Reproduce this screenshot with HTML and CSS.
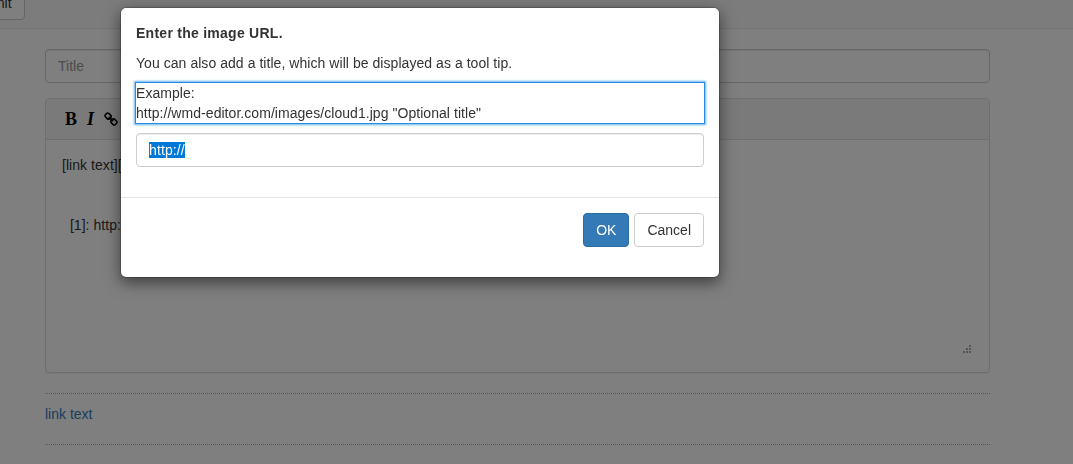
FILE: index.html
```
<!DOCTYPE html>
<html lang="en">
<head>
<meta charset="utf-8">
<title>Editor</title>
<link rel="stylesheet" href="styles.css">
</head>
<body>
<header class="navbar"><button class="btn btn-default submit">Submit</button></header>
<main class="container">
  <input class="form-control title-input" type="text" placeholder="Title">
  <section class="panel">
    <div class="toolbar">
      <span class="tool bold">B</span>
      <span class="tool italic">I</span>
      <svg class="link-icon" viewBox="0 0 14 14" width="14" height="14">
        <g fill="none" stroke="#000" stroke-width="1.6">
          <rect x="-2.9" y="-2.4" width="5.8" height="4.8" rx="1.8" transform="translate(4.1 4.1) rotate(45)"/>
          <rect x="-2.9" y="-2.4" width="5.8" height="4.8" rx="1.8" transform="translate(9.9 9.9) rotate(45)"/>
          <path d="M4.9 4.9l4.2 4.2"/>
        </g>
      </svg>
    </div>
    <div class="editor">[link text][1]


  [1]: http://
      <svg class="grip" viewBox="0 0 8 8" width="8" height="8"><path fill="#aaa" d="M6 0h2v2H6zM3 3h2v2H3zM6 3h2v2H6zM0 6h2v2H0zM3 6h2v2H3zM6 6h2v2H6z"/></svg>
    </div>
  </section>
  <div class="preview"><a class="link">link text</a></div>
</main>
<div class="backdrop"></div>
<div class="modal" role="dialog">
  <div class="modal-body">
    <p class="text heading"><b>Enter the image URL.</b></p>
    <p class="text">You can also add a title, which will be displayed as a tool tip.</p>
    <p class="text example">Example:<br>http://wmd-editor.com/images/cloud1.jpg "Optional title"</p>
    <div class="form-control url"><span class="selected">http://</span></div>
  </div>
  <div class="modal-footer">
    <button class="btn btn-primary">OK</button>
    <button class="btn btn-default">Cancel</button>
  </div>
</div>
</body>
</html>
```
FILE: styles.css
```
* { box-sizing: border-box; }
body {
  margin: 0;
  height: 464px;
  overflow: hidden;
  background: #fff;
  color: #333;
  font: 14px/20px "Liberation Sans", Arial, sans-serif;
}
.navbar {
  height: 29px;
  display: flex;
  align-items: flex-start;
  background: #f8f8f8;
  border-bottom: 1px solid #e7e7e7;
}
.btn {
  height: 34px;
  padding: 6px 12px;
  border: 1px solid #ccc;
  border-radius: 4px;
  font: inherit;
  white-space: nowrap;
}
.btn-default { background: #fff; color: #333; }
.btn-primary { background: #337ab7; border-color: #2e6da4; color: #fff; }
.submit { margin: -14px 0 0 -45px; }
.container { width: 945px; margin: 20px 0 0 45px; }
.form-control {
  display: block;
  width: 100%;
  height: 34px;
  padding: 6px 12px;
  border: 1px solid #ccc;
  border-radius: 4px;
  background: #fff;
  color: #555;
  font: inherit;
  box-shadow: inset 0 1px 1px rgba(0, 0, 0, .075);
}
.title-input::placeholder { color: #999; opacity: 1; }
.panel {
  margin-top: 15px;
  height: 275px;
  border: 1px solid #ddd;
  border-radius: 4px;
  box-shadow: 0 1px 1px rgba(0, 0, 0, .05);
}
.toolbar {
  height: 41px;
  display: flex;
  align-items: center;
  padding-left: 19px;
  background: #f5f5f5;
  border-bottom: 1px solid #ddd;
  border-radius: 3px 3px 0 0;
  color: #000;
}
.tool { font: bold 18px/20px "Liberation Serif", serif; }
.bold { width: 22px; }
.italic { width: 17px; font-style: italic; }
.editor {
  position: relative;
  height: 232px;
  padding: 15px 16px;
  white-space: pre;
  letter-spacing: .05px;
}
.grip { position: absolute; right: 18px; bottom: 19px; }
.preview {
  margin-top: 20px;
  height: 52px;
  padding-top: 10px;
  border-top: 1px dotted #aaa;
  border-bottom: 1px dotted #aaa;
}
.link { color: #337ab7; }
.backdrop { position: fixed; inset: 0; background: rgba(0, 0, 0, .5); }
.modal {
  position: absolute;
  left: 120px;
  top: 7px;
  width: 600px;
  height: 271px;
  background: #fff;
  background-clip: padding-box;
  border: 1px solid rgba(0, 0, 0, .2);
  border-radius: 6px;
  box-shadow: 0 5px 15px rgba(0, 0, 0, .5);
}
.modal-body { padding: 15px 15px 30px; }
.text { margin: 0 0 10px; letter-spacing: .05px; }
.heading { letter-spacing: .26px; }
.example { box-shadow: 0 0 0 1px #2b8be0, 0 0 2px 2px #66b0ee; }
.selected {
  display: inline-block;
  height: 16px;
  margin-top: 2px;
  line-height: 16px;
  letter-spacing: .12px;
  background: #0078d7;
  color: #fff;
  vertical-align: top;
}
.modal-footer {
  display: flex;
  justify-content: flex-end;
  gap: 5px;
  padding: 15px;
  border-top: 1px solid #e5e5e5;
}
```
